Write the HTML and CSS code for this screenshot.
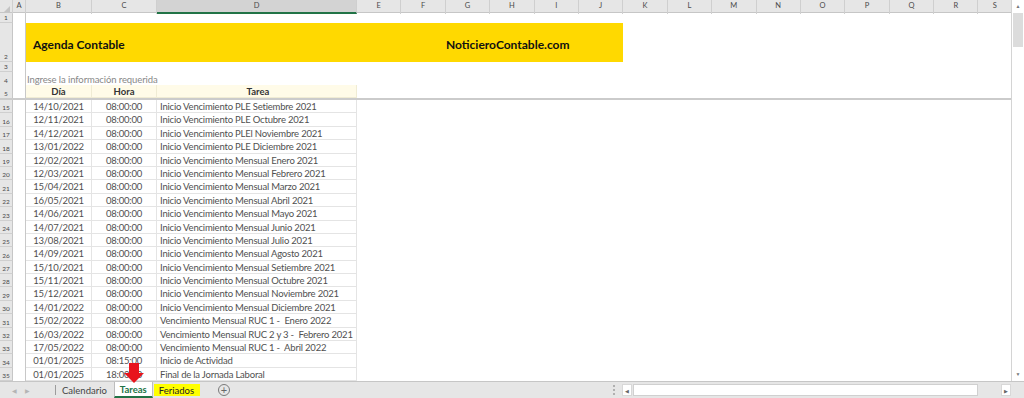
FILE: index.html
```html
<!DOCTYPE html>
<html lang="es">
<head>
  <meta charset="UTF-8">
  <title>Agenda Contable - Tareas</title>
  <link rel="stylesheet" href="styles.css">
</head>
<body>
  <div class="sheet">
    <div class="main">
      <div class="grid">
        <!-- Column headers -->
        <div class="col-heads">
          <div class="corner"><span class="corner-tri"></span></div>
          <div class="ch">A</div>
          <div class="ch">B</div>
          <div class="ch">C</div>
          <div class="ch selected">D</div>
          <div class="ch">E</div>
          <div class="ch">F</div>
          <div class="ch">G</div>
          <div class="ch">H</div>
          <div class="ch">I</div>
          <div class="ch">J</div>
          <div class="ch">K</div>
          <div class="ch">L</div>
          <div class="ch">M</div>
          <div class="ch">N</div>
          <div class="ch">O</div>
          <div class="ch">P</div>
          <div class="ch">Q</div>
          <div class="ch">R</div>
          <div class="ch last">S</div>
        </div>

        <!-- Top rows -->
        <div class="row r-1">
          <div class="rh">1</div>
          <div class="col-a"></div>
        </div>
        <div class="row r-2">
          <div class="rh">2</div>
          <div class="col-a"></div>
          <div class="banner">
            <span class="banner-title">Agenda Contable</span>
            <span class="banner-site">NoticieroContable.com</span>
          </div>
        </div>
        <div class="row r-3">
          <div class="rh">3</div>
          <div class="col-a"></div>
        </div>
        <div class="row r-4">
          <div class="rh">4</div>
          <div class="col-a"></div>
          <div class="hint">Ingrese la información requerida</div>
        </div>
        <div class="row r-5 frozen">
          <div class="rh">5</div>
          <div class="col-a"></div>
          <div class="cell head">Día</div>
          <div class="cell head">Hora</div>
          <div class="cell head wide">Tarea</div>
        </div>

        <!-- Data rows -->
        <div class="row data">
          <div class="rh">15</div><div class="col-a"></div>
          <div class="cell">14/10/2021</div><div class="cell">08:00:00</div>
          <div class="cell wide">Inicio Vencimiento PLE Setiembre 2021</div>
        </div>
        <div class="row data">
          <div class="rh">16</div><div class="col-a"></div>
          <div class="cell">12/11/2021</div><div class="cell">08:00:00</div>
          <div class="cell wide">Inicio Vencimiento PLE Octubre 2021</div>
        </div>
        <div class="row data">
          <div class="rh">17</div><div class="col-a"></div>
          <div class="cell">14/12/2021</div><div class="cell">08:00:00</div>
          <div class="cell wide">Inicio Vencimiento PLEl Noviembre 2021</div>
        </div>
        <div class="row data">
          <div class="rh">18</div><div class="col-a"></div>
          <div class="cell">13/01/2022</div><div class="cell">08:00:00</div>
          <div class="cell wide">Inicio Vencimiento PLE Diciembre 2021</div>
        </div>
        <div class="row data">
          <div class="rh">19</div><div class="col-a"></div>
          <div class="cell">12/02/2021</div><div class="cell">08:00:00</div>
          <div class="cell wide">Inicio Vencimiento Mensual Enero 2021</div>
        </div>
        <div class="row data">
          <div class="rh">20</div><div class="col-a"></div>
          <div class="cell">12/03/2021</div><div class="cell">08:00:00</div>
          <div class="cell wide">Inicio Vencimiento Mensual Febrero 2021</div>
        </div>
        <div class="row data">
          <div class="rh">21</div><div class="col-a"></div>
          <div class="cell">15/04/2021</div><div class="cell">08:00:00</div>
          <div class="cell wide">Inicio Vencimiento Mensual Marzo 2021</div>
        </div>
        <div class="row data">
          <div class="rh">22</div><div class="col-a"></div>
          <div class="cell">16/05/2021</div><div class="cell">08:00:00</div>
          <div class="cell wide">Inicio Vencimiento Mensual Abril 2021</div>
        </div>
        <div class="row data">
          <div class="rh">23</div><div class="col-a"></div>
          <div class="cell">14/06/2021</div><div class="cell">08:00:00</div>
          <div class="cell wide">Inicio Vencimiento Mensual Mayo 2021</div>
        </div>
        <div class="row data">
          <div class="rh">24</div><div class="col-a"></div>
          <div class="cell">14/07/2021</div><div class="cell">08:00:00</div>
          <div class="cell wide">Inicio Vencimiento Mensual Junio 2021</div>
        </div>
        <div class="row data">
          <div class="rh">25</div><div class="col-a"></div>
          <div class="cell">13/08/2021</div><div class="cell">08:00:00</div>
          <div class="cell wide">Inicio Vencimiento Mensual Julio 2021</div>
        </div>
        <div class="row data">
          <div class="rh">26</div><div class="col-a"></div>
          <div class="cell">14/09/2021</div><div class="cell">08:00:00</div>
          <div class="cell wide">Inicio Vencimiento Mensual Agosto 2021</div>
        </div>
        <div class="row data">
          <div class="rh">27</div><div class="col-a"></div>
          <div class="cell">15/10/2021</div><div class="cell">08:00:00</div>
          <div class="cell wide">Inicio Vencimiento Mensual Setiembre 2021</div>
        </div>
        <div class="row data">
          <div class="rh">28</div><div class="col-a"></div>
          <div class="cell">15/11/2021</div><div class="cell">08:00:00</div>
          <div class="cell wide">Inicio Vencimiento Mensual Octubre 2021</div>
        </div>
        <div class="row data">
          <div class="rh">29</div><div class="col-a"></div>
          <div class="cell">15/12/2021</div><div class="cell">08:00:00</div>
          <div class="cell wide">Inicio Vencimiento Mensual Noviembre 2021</div>
        </div>
        <div class="row data">
          <div class="rh">30</div><div class="col-a"></div>
          <div class="cell">14/01/2022</div><div class="cell">08:00:00</div>
          <div class="cell wide">Inicio Vencimiento Mensual Diciembre 2021</div>
        </div>
        <div class="row data">
          <div class="rh">31</div><div class="col-a"></div>
          <div class="cell">15/02/2022</div><div class="cell">08:00:00</div>
          <div class="cell wide">Vencimiento Mensual RUC 1 -  Enero 2022</div>
        </div>
        <div class="row data">
          <div class="rh">32</div><div class="col-a"></div>
          <div class="cell">16/03/2022</div><div class="cell">08:00:00</div>
          <div class="cell wide">Vencimiento Mensual RUC 2 y 3 -  Febrero 2021</div>
        </div>
        <div class="row data">
          <div class="rh">33</div><div class="col-a"></div>
          <div class="cell">17/05/2022</div><div class="cell">08:00:00</div>
          <div class="cell wide">Vencimiento Mensual RUC 1 -  Abril 2022</div>
        </div>
        <div class="row data">
          <div class="rh">34</div><div class="col-a"></div>
          <div class="cell">01/01/2025</div><div class="cell">08:15:00</div>
          <div class="cell wide">Inicio de Actividad</div>
        </div>
        <div class="row data">
          <div class="rh">35</div><div class="col-a"></div>
          <div class="cell">01/01/2025</div><div class="cell">18:00:00</div>
          <div class="cell wide">Final de la Jornada Laboral</div>
        </div>
      </div>

      <!-- Vertical scrollbar -->
      <div class="vscroll">
        <div class="vs-btn">&#9650;</div>
        <div class="vs-thumb"></div>
        <div class="vs-track"></div>
        <div class="vs-btn">&#9660;</div>
      </div>
    </div>

    <!-- Sheet tabs -->
    <div class="tabbar">
      <div class="tab-nav"><span>&#9664;</span><span>&#9654;</span></div>
      <div class="tab-sep"></div>
      <div class="tab">Calendario</div>
      <div class="tab active">Tareas
        <span class="arrow"></span>
      </div>
      <div class="tab marked">Feriados</div>
      <div class="tab-add">+</div>
      <div class="tab-spacer"></div>
      <div class="hs-grip"></div>
      <div class="hscroll">
        <div class="hs-btn">&#9664;</div>
        <div class="hs-thumb"></div>
        <div class="hs-track"></div>
        <div class="hs-btn">&#9654;</div>
      </div>
      <div class="hs-corner"></div>
    </div>
  </div>
</body>
</html>
```

FILE: styles.css
```css
:root {
  --head-bg: #e6e6e6;
  --head-line: #cfcfcf;
  --cell-line: #e4e4e4;
  --text: #505050;
  --yellow: #ffd900;
  --green: #217346;
}

* {
  margin: 0;
  padding: 0;
  box-sizing: border-box;
}

body {
  font-family: Lato, "Liberation Sans", sans-serif;
  background: #fff;
  color: var(--text);
  width: 1024px;
  height: 398px;
  overflow: hidden;
}

.sheet {
  display: flex;
  flex-direction: column;
  height: 398px;
}

.main {
  display: flex;
  flex: 1;
  min-height: 0;
}

.grid {
  flex: 1;
  overflow: hidden;
}

/* Column headers */
.col-heads {
  display: grid;
  grid-template-columns: 13px 13px 66px 65px 200px repeat(14, 44.4px) 1fr;
  height: 13px;
  background: var(--head-bg);
  border-bottom: 1px solid #c6c6c6;
}

.corner {
  position: relative;
  border-right: 1px solid var(--head-line);
}

.corner-tri {
  position: absolute;
  right: 2px;
  bottom: 2px;
  width: 0;
  height: 0;
  border-left: 6px solid transparent;
  border-bottom: 6px solid #c4c4c4;
}

.ch {
  font-size: 7.5px;
  color: #4a4a4a;
  text-align: center;
  line-height: 12px;
  border-right: 1px solid var(--head-line);
}

.ch.selected {
  background: #d3d3d3;
  border-bottom: 2px solid var(--green);
}

.ch.last {
  border-right: none;
}

/* Rows */
.row {
  display: grid;
  grid-template-columns: 13px 13px 66px 65px 200px 1fr;
  height: 13.4px;
}

.rh {
  background: var(--head-bg);
  border-right: 1px solid #c6c6c6;
  border-bottom: 1px solid var(--head-line);
  font-size: 6.5px;
  color: #4a4a4a;
  text-align: center;
  display: flex;
  align-items: flex-end;
  justify-content: center;
  padding-bottom: 1px;
}

.col-a {
  border-right: 1px solid #c8c8c8;
}

.r-1, .r-3 {
  height: 10px;
}

.r-2 {
  height: 39px;
}

.r-4 {
  height: 13px;
}

.r-5 {
  height: 15px;
}

.banner {
  grid-column: 3 / 7;
  width: 597px;
  background: var(--yellow);
  display: grid;
  grid-template-columns: 420px 1fr;
  align-items: center;
  padding-top: 3px;
  font-weight: 700;
  font-size: 12px;
  color: #111;
}

.banner-title {
  padding-left: 7px;
}

.hint {
  grid-column: 3 / 7;
  font-size: 9.5px;
  letter-spacing: -0.1px;
  color: #888;
  padding: 1px 0 0 1px;
  line-height: 13px;
  white-space: nowrap;
}

.frozen {
  border-bottom: 2px solid #cbcbcb;
}

.frozen .rh {
  border-bottom: none;
}

.cell {
  font-size: 9.5px;
  letter-spacing: -0.2px;
  line-height: 13px;
  text-align: center;
  white-space: pre;
  overflow: hidden;
  border-right: 1px solid var(--cell-line);
  border-bottom: 1px solid var(--cell-line);
}

.cell.wide {
  text-align: left;
  padding-left: 3px;
}

.cell.head {
  background: #fffbe8;
  font-weight: 700;
  letter-spacing: 0;
  color: #333;
  text-align: center;
  border-color: #f0ecd4;
}

/* Vertical scrollbar */
.vscroll {
  width: 13px;
  display: flex;
  flex-direction: column;
  border-left: 1px solid #d4d4d4;
  background: #fff;
}

.vs-btn {
  height: 13px;
  font-size: 5px;
  color: #777;
  text-align: center;
  line-height: 13px;
  background: #fff;
}

.vs-thumb {
  height: 34px;
  margin: 0 1px;
  background: #dcdcdc;
}

.vs-track {
  flex: 1;
}

/* Tab bar */
.tabbar {
  height: 17px;
  background: var(--head-bg);
  border-top: 1px solid #c6c6c6;
  display: flex;
  align-items: stretch;
  font-size: 9.5px;
}

.tab-nav {
  width: 55px;
  display: flex;
  gap: 8px;
  padding-left: 12px;
  align-items: center;
  font-size: 6px;
  color: #b4b4b4;
}

.tab-sep {
  width: 1px;
  margin: 3px 0;
  background: #9c9c9c;
}

.tab {
  margin-left: 1px;
  padding: 0 5px;
  display: flex;
  align-items: center;
  color: #444;
  position: relative;
}

.tab.active {
  background: #fff;
  color: var(--green);
  font-weight: 700;
  margin-left: 2px;
  border-bottom: 2px solid var(--green);
  border-left: 1px solid #bdbdbd;
  border-right: 1px solid #bdbdbd;
}

.tab.marked {
  background: #ffff00;
  color: #222;
  margin: 2px 0 2px 1px;
  padding: 0 6px 0 5px;
}

.arrow {
  position: absolute;
  left: 9px;
  top: -19px;
  width: 20px;
  height: 20px;
}

.arrow::before {
  content: "";
  position: absolute;
  left: 5px;
  top: 0;
  width: 10px;
  height: 10px;
  background: #e8141c;
}

.arrow::after {
  content: "";
  position: absolute;
  left: 0;
  top: 10px;
  border-left: 10px solid transparent;
  border-right: 10px solid transparent;
  border-top: 10px solid #e8141c;
}

.tab-add {
  margin-left: 18px;
  align-self: center;
  width: 12px;
  height: 12px;
  border: 1px solid #7a7a7a;
  border-radius: 50%;
  font-size: 11px;
  line-height: 9px;
  text-align: center;
  color: #666;
}

.tab-spacer {
  flex: 1;
}

.hs-grip {
  width: 2px;
  margin: 3px 7px 3px 0;
  border-left: 2px dotted #b0b0b0;
}

.hscroll {
  width: 389px;
  display: flex;
  align-items: center;
  margin: 2px 0;
}

.hs-btn {
  width: 10px;
  height: 100%;
  background: #fff;
  font-size: 5px;
  color: #666;
  line-height: 13px;
  text-align: center;
  border: 1px solid #d8d8d8;
}

.hs-thumb {
  width: 345px;
  height: 100%;
  background: #fff;
  border: 1px solid #d0d0d0;
  margin-left: 1px;
}

.hs-track {
  flex: 1;
}

.hs-corner {
  width: 13px;
}
```
